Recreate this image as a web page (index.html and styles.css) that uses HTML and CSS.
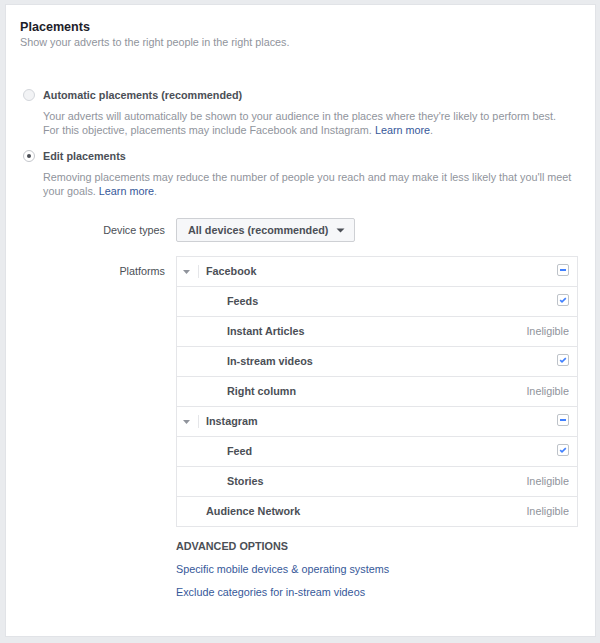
FILE: index.html
```html
<!DOCTYPE html>
<html>
<head>
<meta charset="utf-8">
<link rel="stylesheet" href="styles.css">
</head>
<body>
<div class="card">
  <h1 class="title">Placements</h1>
  <p class="subtitle">Show your adverts to the right people in the right places.</p>

  <div class="option option-auto">
    <div class="option-head"><span class="radio"></span><span class="option-label">Automatic placements (recommended)</span></div>
    <p class="desc">Your adverts will automatically be shown to your audience in the places where they're likely to perform best.<br>For this objective, placements may include Facebook and Instagram. <a class="link" href="#">Learn more</a>.</p>
  </div>

  <div class="option option-edit">
    <div class="option-head"><span class="radio radio-on"></span><span class="option-label">Edit placements</span></div>
    <p class="desc">Removing placements may reduce the number of people you reach and may make it less likely that you'll meet<br>your goals. <a class="link" href="#">Learn more</a>.</p>
  </div>

  <div class="field field-device">
    <div class="field-label">Device types</div>
    <div class="field-body">
      <button class="select">All devices (recommended)<svg class="select-caret" width="9" height="5" viewBox="0 0 9 5"><path d="M0.5 0.5H8.5L4.5 4.5Z" fill="#4b4f56"/></svg></button>
    </div>
  </div>

  <div class="field field-platforms">
    <div class="field-label field-label-tree">Platforms</div>
    <div class="field-body">
      <div class="tree">
        <div class="row row-group">
          <span class="caret"><svg width="7" height="4" viewBox="0 0 7 4"><path d="M0 0H7L3.5 4Z" fill="#90949c"/></svg></span>
          <span class="vsep"></span>
          <span class="name">Facebook</span>
          <span class="box"><svg width="10" height="10" viewBox="0 0 10 10"><rect x="2" y="4" width="6" height="2" fill="#4080ff"/></svg></span>
        </div>
        <div class="row row-sub">
          <span class="name">Feeds</span>
          <span class="box"><svg width="10" height="10" viewBox="0 0 10 10"><path d="M2.2 5.2L4 6.9L7.8 3.1" fill="none" stroke="#4080ff" stroke-width="1.6"/></svg></span>
        </div>
        <div class="row row-sub">
          <span class="name">Instant Articles</span>
          <span class="status">Ineligible</span>
        </div>
        <div class="row row-sub">
          <span class="name">In-stream videos</span>
          <span class="box"><svg width="10" height="10" viewBox="0 0 10 10"><path d="M2.2 5.2L4 6.9L7.8 3.1" fill="none" stroke="#4080ff" stroke-width="1.6"/></svg></span>
        </div>
        <div class="row row-sub">
          <span class="name">Right column</span>
          <span class="status">Ineligible</span>
        </div>
        <div class="row row-group">
          <span class="caret"><svg width="7" height="4" viewBox="0 0 7 4"><path d="M0 0H7L3.5 4Z" fill="#90949c"/></svg></span>
          <span class="vsep"></span>
          <span class="name">Instagram</span>
          <span class="box"><svg width="10" height="10" viewBox="0 0 10 10"><rect x="2" y="4" width="6" height="2" fill="#4080ff"/></svg></span>
        </div>
        <div class="row row-sub">
          <span class="name">Feed</span>
          <span class="box"><svg width="10" height="10" viewBox="0 0 10 10"><path d="M2.2 5.2L4 6.9L7.8 3.1" fill="none" stroke="#4080ff" stroke-width="1.6"/></svg></span>
        </div>
        <div class="row row-sub">
          <span class="name">Stories</span>
          <span class="status">Ineligible</span>
        </div>
        <div class="row row-network">
          <span class="name">Audience Network</span>
          <span class="status">Ineligible</span>
        </div>
      </div>
    </div>
  </div>

  <div class="advanced">
    <div class="advanced-title">ADVANCED OPTIONS</div>
    <a class="link adv-link" href="#">Specific mobile devices &amp; operating systems</a>
    <a class="link adv-link" href="#">Exclude categories for in-stream videos</a>
  </div>
</div>
</body>
</html>
```

FILE: styles.css
```css
* { box-sizing: border-box; }

html, body {
  margin: 0;
  padding: 0;
  background: #e9ebee;
}

body {
  font-family: "Liberation Sans", Arial, Helvetica, sans-serif;
  font-size: 10.8px;
  color: #4b4f56;
}

.card {
  width: 591px;
  height: 633px;
  margin: 4px 0 0 5px;
  background: #ffffff;
  border: 1px solid #e1e3e7;
  padding: 14px 14px 0 14px;
}

.title {
  margin: 0;
  font-size: 12.6px;
  line-height: 16px;
  font-weight: bold;
  color: #1d2129;
}

.subtitle {
  margin: 0;
  line-height: 14px;
  color: #90949c;
}

.option-auto { margin-top: 39px; }
.option-edit { margin-top: 12px; }

.option-head {
  display: flex;
  align-items: center;
  height: 14px;
}

.radio {
  width: 12px;
  height: 12px;
  margin-left: 3px;
  border-radius: 50%;
  border: 1px solid #d3d6db;
  background: #f2f3f5;
  display: flex;
  align-items: center;
  justify-content: center;
}

.radio-on {
  background: #ffffff;
  border-color: #c4c7cc;
}

.radio-on::after {
  content: "";
  width: 4px;
  height: 4px;
  border-radius: 50%;
  background: #4b4f56;
}

.option-label {
  margin-left: 8px;
  font-weight: bold;
  line-height: 14px;
  color: #4b4f56;
}

.desc {
  margin: 8px 0 0 23px;
  line-height: 13.5px;
  color: #90949c;
  white-space: nowrap;
}

.link {
  color: #365899;
  text-decoration: none;
}

.field {
  display: flex;
  align-items: flex-start;
}

.field-device { margin-top: 20px; }
.field-platforms { margin-top: 14px; }

.field-label {
  width: 145px;
  margin-right: 11px;
  text-align: right;
  line-height: 24px;
  color: #4b4f56;
}

.field-label-tree {
  padding-top: 1px;
  line-height: 29px;
}

.select {
  display: flex;
  align-items: center;
  height: 24px;
  padding: 0 9px 0 11px;
  border: 1px solid #ced0d4;
  border-radius: 2px;
  background: #f6f7f9;
  font-family: inherit;
  font-size: 10.8px;
  font-weight: bold;
  color: #4b4f56;
  line-height: 22px;
}

.select-caret {
  margin-left: 8px;
  margin-top: 1px;
}

.tree {
  width: 402px;
  border: 1px solid #e5e6e9;
  border-bottom: none;
}

.row {
  display: flex;
  align-items: center;
  height: 30px;
  border-bottom: 1px solid #e5e6e9;
  padding-right: 8px;
  line-height: 29px;
}

.row .name {
  font-weight: bold;
  color: #4b4f56;
  flex: 1;
}

.row-group { padding-left: 6px; }
.row-sub { padding-left: 50px; }
.row-network { padding-left: 29px; }

.caret {
  display: flex;
  width: 7px;
  height: 4px;
}

.caret svg { display: block; }

.vsep {
  width: 1px;
  height: 13px;
  margin-left: 8px;
  margin-right: 7px;
  background: #e5e6e9;
}

.box {
  width: 12px;
  height: 12px;
  margin-bottom: 4px;
  border: 1px solid #bec3c9;
  border-radius: 2px;
  background: #ffffff;
  display: flex;
  align-items: center;
  justify-content: center;
}

.box svg { display: block; }

.status {
  color: #90949c;
  margin-bottom: 1px;
}

.advanced {
  margin-left: 156px;
  margin-top: 12px;
}

.advanced-title {
  font-weight: bold;
  line-height: 14px;
  color: #4b4f56;
}

.adv-link {
  display: block;
  margin-top: 9px;
  line-height: 14px;
  width: max-content;
}
```
